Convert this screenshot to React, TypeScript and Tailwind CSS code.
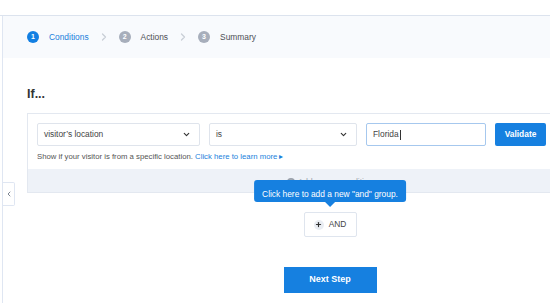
import { ChevronDown, ChevronLeft, ChevronRight, Plus } from "lucide-react";

const steps = [
    { n: 1, label: "Conditions", active: true },
    { n: 2, label: "Actions", active: false },
    { n: 3, label: "Summary", active: false },
];

const Stepper = () => {
    return (
        <div className="flex flex-row items-center h-[42px] bg-[#f8fafd] pl-[24px]">
            {steps.map((step, index) => (
                <div key={step.n} className="flex flex-row items-center">
                    {index > 0 && (
                        <ChevronRight className="mx-[9px] w-[12px] h-[12px] text-[#c9ced6]" strokeWidth={2.5} />
                    )}
                    <span
                        className={`flex justify-center items-center rounded-full w-[12px] h-[12px] text-[7px] font-bold text-white ${step.active ? "bg-[#127fe2]" : "bg-[#a7aebb]"}`}
                    >
                        {step.n}
                    </span>
                    <span className={`ml-[10px] text-[8.4px] ${step.active ? "text-[#1a7fdc]" : "text-[#4d4f55]"}`}>
                        {step.label}
                    </span>
                </div>
            ))}
        </div>
    );
};

const Select = ({ value, width }: { value: string; width: string }) => {
    return (
        <div className={`flex flex-row justify-between items-center bg-white px-[6px] border border-[#dfe4ec] rounded-[2px] h-[23px] ${width}`}>
            <span className="text-[#444] text-[8.4px]">{value}</span>
            <ChevronDown className="mr-[2px] w-[9px] h-[9px] text-[#333]" strokeWidth={3} />
        </div>
    );
};

export default function App() {
    return (
        <div className="relative bg-white w-[550px] h-[303px] overflow-hidden font-['Liberation_Sans',Arial,sans-serif]">
            <div className="border-[#dce3ee] border-b h-[16px]" />
            <div className="flex flex-row h-[287px]">
                <div className="border-[#dfe6f2] border-r w-[3px] shrink-0" />
                <div className="flex flex-col flex-1">
                    <Stepper />

                    <div className="flex flex-col ml-[24px] w-[606px] shrink-0">
                        <h1 className="mt-[29px] font-bold text-[#333] text-[12.5px] leading-[14px]">If...</h1>

                        <div className="flex flex-col mt-[12px] border border-[#e3e8f0] w-[606px]">
                            <div className="flex flex-col bg-white px-[9px] pt-[9px] pb-[7px]">
                                <div className="flex flex-row gap-[9px]">
                                    <Select value="visitor’s location" width="w-[163px]" />
                                    <Select value="is" width="w-[148px]" />
                                    <div className="flex items-center bg-white px-[6px] border border-[#a6c8ee] rounded-[2px] w-[120px] h-[23px]">
                                        <span className="text-[#444] text-[8.4px]">Florida</span>
                                        <span className="bg-[#333] ml-[1px] w-[1px] h-[10px]" />
                                    </div>
                                    <button className="bg-[#1680e0] rounded-[2px] w-[51px] h-[23px] font-bold text-[8.4px] text-white">
                                        Validate
                                    </button>
                                </div>
                                <p className="mt-[6px] text-[#555] text-[7.75px] leading-[10px]">
                                    Show if your visitor is from a specific location.{" "}
                                    <span className="text-[#1a7fdc]">Click here to learn more ▸</span>
                                </p>
                            </div>
                            <div className="flex justify-center items-center bg-[#eef2f8] h-[23px]">
                                <span className="flex flex-row items-center gap-[3px] mt-[3px] text-[#9aa1ab] text-[8.4px]">
                                    <span className="flex justify-center items-center bg-[#9aa1ab] rounded-full w-[8px] h-[8px]">
                                        <Plus className="w-[6px] h-[6px] text-white" strokeWidth={4} />
                                    </span>
                                    Add a new condition
                                </span>
                            </div>
                        </div>

                        <div className="relative self-center mt-[19px]">
                            <div className="bottom-[calc(100%+10px)] left-1/2 absolute bg-[#1680e0] px-[8px] rounded-[3px] h-[22px] whitespace-nowrap -translate-x-1/2">
                                <span className="text-[8.4px] text-white leading-[22px]">
                                    Click here to add a new "and" group.
                                </span>
                                <span className="top-full left-1/2 absolute border-x-[5px] border-x-transparent border-t-[5px] border-t-[#1680e0] w-0 h-0 -translate-x-1/2" />
                            </div>
                            <button className="flex flex-row justify-center items-center gap-[5px] bg-white border border-[#dfe5ee] rounded-[2px] w-[53px] h-[25px]">
                                <span className="flex justify-center items-center bg-[#e9edf3] rounded-full w-[10px] h-[10px]">
                                    <Plus className="w-[7px] h-[7px] text-[#333]" strokeWidth={4} />
                                </span>
                                <span className="text-[#444] text-[8.4px]">AND</span>
                            </button>
                        </div>

                        <button className="self-center bg-[#1680e0] mt-[30px] w-[93px] h-[26px] font-bold text-[9px] text-white">
                            Next Step
                        </button>
                    </div>
                </div>
            </div>

            <div className="top-[182px] left-[3px] absolute flex justify-center items-center bg-white border border-[#dfe6f2] border-l-0 rounded-r-[2px] w-[12px] h-[24px]">
                <ChevronLeft className="w-[8px] h-[8px] text-[#7d8592]" strokeWidth={3} />
            </div>
        </div>
    );
}
